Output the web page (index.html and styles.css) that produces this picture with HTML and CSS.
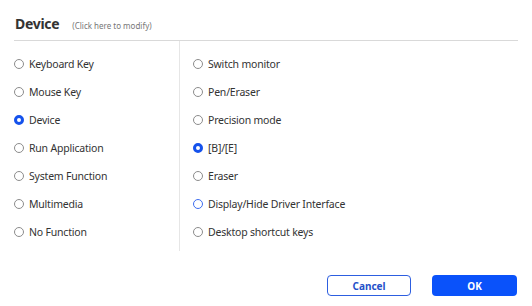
FILE: index.html
```html
<!DOCTYPE html>
<html lang="en">
<head>
    <meta charset="UTF-8">
    <title>Device</title>
    <link rel="stylesheet" href="styles.css">
</head>
<body>
    <div class="dialog">
        <div class="header">
            <span class="title">Device</span>
            <span class="hint">(Click here to modify)</span>
        </div>

        <div class="columns">
            <div class="column left">
                <label class="option"><span class="radio"></span>Keyboard Key</label>
                <label class="option"><span class="radio"></span>Mouse Key</label>
                <label class="option"><span class="radio checked"></span>Device</label>
                <label class="option"><span class="radio"></span>Run Application</label>
                <label class="option"><span class="radio"></span>System Function</label>
                <label class="option"><span class="radio"></span>Multimedia</label>
                <label class="option"><span class="radio"></span>No Function</label>
            </div>
            <div class="column right">
                <label class="option"><span class="radio"></span>Switch monitor</label>
                <label class="option"><span class="radio"></span>Pen/Eraser</label>
                <label class="option"><span class="radio"></span>Precision mode</label>
                <label class="option"><span class="radio checked"></span>[B]/[E]</label>
                <label class="option"><span class="radio"></span>Eraser</label>
                <label class="option"><span class="radio hover"></span>Display/Hide Driver Interface</label>
                <label class="option"><span class="radio"></span>Desktop shortcut keys</label>
            </div>
        </div>

        <div class="footer">
            <button class="btn cancel">Cancel</button>
            <button class="btn ok">OK</button>
        </div>
    </div>
</body>
</html>
```

FILE: styles.css
```css
/* Reset */
* {
    margin: 0;
    padding: 0;
    box-sizing: border-box;
}

body {
    font-family: 'Noto Sans', 'Open Sans', sans-serif;
    background-color: #fff;
    color: #333;
}

.dialog {
    width: 532px;
    height: 306px;
    padding: 0 14px;
}

/* Title row */
.header {
    height: 41px;
    display: flex;
    align-items: baseline;
    padding: 14px 0 0 1px;
    border-bottom: 1px solid #d9d9d9;
}

.title {
    font-size: 14px;
    font-weight: 700;
    letter-spacing: -0.3px;
    color: #333;
}

.hint {
    font-size: 8px;
    color: #777;
    margin-left: 13px;
}

/* Option columns */
.columns {
    display: flex;
}

.column {
    padding: 9px 0 5px;
}

.left {
    width: 166px;
    border-right: 1px solid #e6e6e6;
}

.right {
    padding-left: 13px;
}

.option {
    display: flex;
    align-items: center;
    height: 28px;
    font-size: 10.5px;
    letter-spacing: -0.2px;
    color: #333;
}

.radio {
    width: 10px;
    height: 10px;
    border: 1px solid #8c8c8c;
    border-radius: 50%;
    margin-right: 5px;
    flex-shrink: 0;
}

.radio.checked {
    border: 3px solid #1552ec;
}

.radio.hover {
    border-color: #3d6df0;
}

/* Buttons */
.footer {
    display: flex;
    justify-content: flex-end;
    gap: 21px;
    padding: 24px 1px 0 0;
}

.btn {
    width: 84px;
    height: 21px;
    border-radius: 4px;
    font-family: 'Noto Sans', sans-serif;
    font-size: 10px;
    font-weight: 700;
    cursor: pointer;
}

.cancel {
    background: #fff;
    border: 1px solid #2d5ee0;
    color: #2451c9;
}

.ok {
    width: 85px;
    background: #0a52fa;
    border: none;
    color: #fff;
}
```
